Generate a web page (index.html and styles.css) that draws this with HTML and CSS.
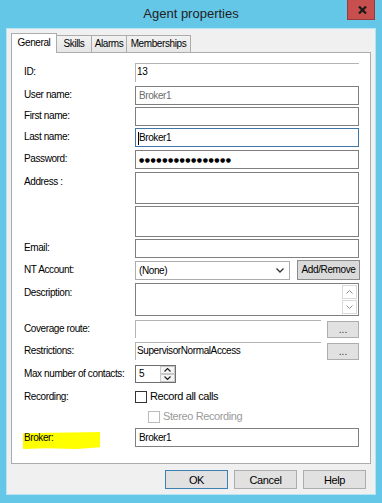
FILE: index.html
```html
<!DOCTYPE html>
<html>
<head>
<meta charset="utf-8">
<link rel="stylesheet" href="styles.css">
</head>
<body>
<div class="window">
  <div class="titlebar">
    <div class="title">Agent properties</div>
    <div class="close"><svg width="9" height="8" viewBox="0 0 9 8"><path d="M1 0.5 L8 7.5 M8 0.5 L1 7.5" stroke="#1a1a1a" stroke-width="2.2" fill="none"/></svg></div>
  </div>
  <div class="client">
    <div class="tabs">
      <div class="tab active w-general">General</div>
      <div class="tab w-skills">Skills</div>
      <div class="tab w-alarms">Alarms</div>
      <div class="tab w-members">Memberships</div>
    </div>
    <div class="panel">
      <div class="row"><div class="lbl">ID:</div><div class="static">13</div></div>
      <div class="row mt2"><div class="lbl">User name:</div><div class="field disabled-text">Broker1</div></div>
      <div class="row"><div class="lbl">First name:</div><div class="field"></div></div>
      <div class="row"><div class="lbl">Last name:</div><div class="field focused"><span class="caret"></span>Broker1</div></div>
      <div class="row mt1"><div class="lbl">Password:</div><div class="field pw">●●●●●●●●●●●●●●●●</div></div>
      <div class="row mt1"><div class="lbl lbl-top">Address :</div><div class="field h32"></div></div>
      <div class="row"><div class="lbl"></div><div class="field h31"></div></div>
      <div class="row"><div class="lbl">Email:</div><div class="field"></div></div>
      <div class="row mt1">
        <div class="lbl">NT Account:</div>
        <div class="nt">
          <div class="combo"><span>(None)</span><svg width="8" height="5" viewBox="0 0 8 5"><path d="M0.5 0.5 L4 4 L7.5 0.5" stroke="#333" stroke-width="1.3" fill="none"/></svg></div>
          <div class="btn addremove">Add/Remove</div>
        </div>
      </div>
      <div class="row mt1">
        <div class="lbl lbl-top">Description:</div>
        <div class="field h33 desc">
          <div class="scroll">
            <div class="sbtn"><svg width="7" height="4" viewBox="0 0 7 4"><path d="M0.5 3.5 L3.5 0.5 L6.5 3.5" stroke="#8a8a8a" stroke-width="1" fill="none"/></svg></div>
            <div class="sbtn"><svg width="7" height="4" viewBox="0 0 7 4"><path d="M0.5 0.5 L3.5 3.5 L6.5 0.5" stroke="#8a8a8a" stroke-width="1" fill="none"/></svg></div>
          </div>
        </div>
      </div>
      <div class="row mt2">
        <div class="lbl">Coverage route:</div>
        <div class="pick"><div class="static short"></div><div class="btn dots">...</div></div>
      </div>
      <div class="row mt2">
        <div class="lbl">Restrictions:</div>
        <div class="pick"><div class="static short">SupervisorNormalAccess</div><div class="btn dots">...</div></div>
      </div>
      <div class="row mt3">
        <div class="lbl">Max number of contacts:</div>
        <div class="spin">
          <span class="spinval">5</span>
          <div class="spinbtns">
            <div class="spb"><svg width="7" height="4" viewBox="0 0 7 4"><path d="M0.5 3.5 L3.5 0.5 L6.5 3.5" stroke="#222" stroke-width="1.2" fill="none"/></svg></div>
            <div class="spb"><svg width="7" height="4" viewBox="0 0 7 4"><path d="M0.5 0.5 L3.5 3.5 L6.5 0.5" stroke="#222" stroke-width="1.2" fill="none"/></svg></div>
          </div>
        </div>
      </div>
      <div class="row mt5 chkrow">
        <div class="lbl lbl-chk">Recording:</div>
        <div class="chk"><span class="cb"></span><span>Record all calls</span></div>
      </div>
      <div class="row mt5 chkrow">
        <div class="lbl"></div>
        <div class="chk indent disabled"><span class="cb"></span><span>Stereo Recording</span></div>
      </div>
      <div class="row mt3">
        <div class="lbl"><span class="hl">Broker:</span></div>
        <div class="field">Broker1</div>
      </div>
    </div>
    <div class="buttons">
      <div class="btn bottom default">OK</div>
      <div class="btn bottom">Cancel</div>
      <div class="btn bottom">Help</div>
    </div>
  </div>
</div>
</body>
</html>
```

FILE: styles.css
```css
* { box-sizing: border-box; }
html, body { margin: 0; padding: 0; }
body {
  width: 382px;
  height: 503px;
  background: #64c7e8;
  font-family: "Liberation Sans", Arial, sans-serif;
  font-size: 10px;
  letter-spacing: -0.4px;
  color: #000;
  overflow: hidden;
}
.window { display: flex; flex-direction: column; height: 503px; }

.titlebar {
  height: 28px;
  position: relative;
  display: flex;
  justify-content: center;
  align-items: center;
}
.title {
  font-family: "Liberation Sans", Arial, sans-serif;
  font-size: 13px;
  letter-spacing: 0;
  color: #222;
  margin-top: -2px;
}
.close {
  position: absolute;
  top: 0;
  right: 7px;
  width: 28px;
  height: 20px;
  background: #c7504f;
  border: 1px solid #9a3a3a;
  border-top: none;
  display: flex;
  align-items: center;
  justify-content: center;
  padding-left: 2px;
}

.client {
  margin: 0 6px 8px 6px;
  border: 1px solid #b6e4f4;
  background: #f0f0f0;
  flex: 1;
  padding: 4px 4px 0 4px;
  display: flex;
  flex-direction: column;
}

.tabs { display: flex; align-items: flex-end; height: 19px; }
.tab {
  height: 17px;
  border: 1px solid #acacac;
  border-bottom: none;
  background: linear-gradient(#f2f2f2, #e6e6e6);
  text-align: center;
  line-height: 15px;
  margin-left: -1px;
}
.tab.active {
  height: 20px;
  background: #fff;
  position: relative;
  z-index: 1;
  margin-bottom: -1px;
  margin-left: 0;
  line-height: 17px;
}
.w-general { width: 46px; }
.w-skills { width: 36px; }
.w-alarms { width: 36px; }
.w-members { width: 65px; }

.panel {
  height: 412px;
  border: 1px solid #acacac;
  background: #fff;
  padding: 10px 11px 0 12px;
  display: flex;
  flex-direction: column;
  gap: 2px;
}
.mt1 { margin-top: 1px; }
.mt2 { margin-top: 2px; }
.mt3 { margin-top: 3px; }
.mt5 { margin-top: 5px; }

.row { display: flex; align-items: flex-start; }
.lbl {
  width: 111px;
  flex: none;
  padding-top: 2px;
  line-height: 14px;
  color: #000;
  white-space: nowrap;
}
.lbl-top { padding-top: 3px; }
.lbl-chk { padding-top: 0; line-height: 13px; }

.field {
  flex: 1;
  height: 19px;
  border: 1px solid #7f7f7f;
  background: #fff;
  padding: 2px 2px 0 3px;
  line-height: 14px;
  display: flex;
  align-items: flex-start;
}
.field.focused { border-color: #3f76a8; padding-left: 2px; }
.caret { width: 1px; height: 13px; background: #000; margin-top: 1px; }
.disabled-text { color: #6d6d6d; }
.h31 { height: 31px; }
.h32 { height: 32px; }
.h33 { height: 33px; }
.pw {
  font-family: "DejaVu Sans", sans-serif;
  font-size: 6px;
  letter-spacing: 0.55px;
  line-height: 14px;
  padding-top: 2px;
}

.static {
  flex: 1;
  height: 19px;
  border-top: 1px solid #b4b4b4;
  border-left: 1px solid #b4b4b4;
  padding: 1px 2px 0 1px;
  line-height: 14px;
}
.static.short { flex: none; width: 186px; height: 18px; }

.nt { flex: 1; display: flex; align-items: flex-start; gap: 7px; }
.combo {
  width: 155px;
  height: 19px;
  border: 1px solid #acacac;
  background: #fff;
  display: flex;
  align-items: center;
  justify-content: space-between;
  padding: 0 5px 0 3px;
}
.combo span { line-height: 14px; }

.btn {
  background: #e1e1e1;
  border: 1px solid #adadad;
  display: flex;
  align-items: center;
  justify-content: center;
  line-height: 14px;
}
.addremove {
  width: 63px;
  height: 20px;
  margin-top: -1px;
  background: #dadada;
  border-color: #8c8c8c;
}

.desc { justify-content: flex-end; padding: 1px 1px 0 0; }
.scroll { display: flex; flex-direction: column; gap: 1px; }
.sbtn {
  width: 15px;
  height: 14px;
  border: 1px solid #dadada;
  background: #fff;
  display: flex;
  align-items: center;
  justify-content: center;
}

.pick { flex: 1; display: flex; align-items: flex-start; gap: 6px; }
.dots {
  width: 32px;
  height: 17px;
  margin-top: 1px;
  align-items: flex-end;
  line-height: 10px;
  padding-bottom: 2px;
  color: #333;
  letter-spacing: 0;
}

.spin {
  width: 41px;
  height: 18px;
  border: 1px solid #6e6e6e;
  background: #fff;
  display: flex;
  justify-content: space-between;
  padding: 0 0 0 3px;
}
.spinval { line-height: 16px; }
.spinbtns { display: flex; flex-direction: column; width: 15px; }
.spb {
  height: 8px;
  border: 1px solid #c8c8c8;
  background: #f4f4f4;
  display: flex;
  align-items: center;
  justify-content: center;
}

.chkrow { height: 13px; }
.chk { display: flex; align-items: center; gap: 3px; line-height: 13px; font-size: 11px; letter-spacing: -0.4px; }
.cb {
  width: 12px;
  height: 12px;
  border: 1px solid #333;
  background: #fff;
  display: block;
}
.chk.indent { margin-left: 13px; }
.chk.disabled { color: #9a9a9a; }
.chk.disabled .cb { border-color: #bcbcbc; }

.hl {
  display: inline-block;
  background: #ffff00;
  width: 77px;
  height: 17px;
  margin: 2px 0 0 -1px;
  padding: 0 0 0 1px;
  line-height: 11px;
  clip-path: polygon(0 8%, 100% 0, 100% 90%, 70% 100%, 30% 96%, 0 100%);
}

.buttons {
  display: flex;
  justify-content: flex-end;
  gap: 6px;
  margin-top: 6px;
  padding-right: 5px;
}
.bottom { width: 63px; height: 19px; font-size: 11px; }
.default { border-color: #3c7fb1; }
```
